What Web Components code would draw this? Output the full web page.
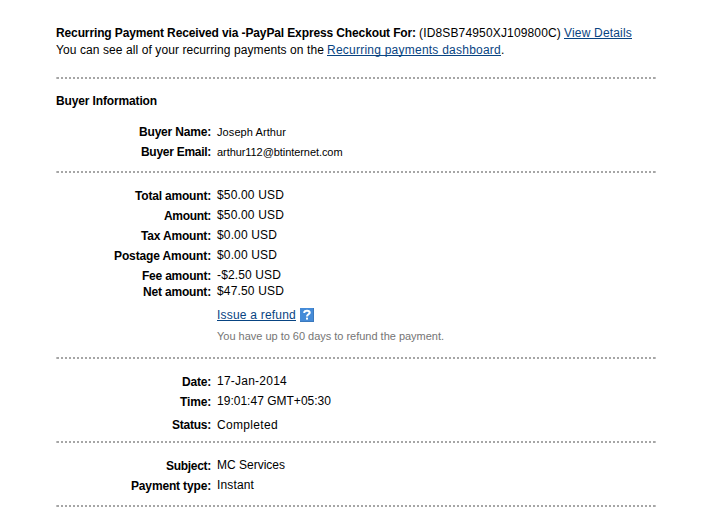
<!DOCTYPE html>
<html lang="en">
<head>
<meta charset="utf-8">
<title>Transaction Details</title>
<style>
  body {
    margin: 0;
    background: #fff;
    color: #000;
    font: 12px/16px "Liberation Sans", Arial, sans-serif;
  }
</style>
</head>
<body>
<transaction-details>
  <detail-section style="--top: 25px; --bottom: 19px">
    <div><fit-text width="360"><b>Recurring Payment Received via -PayPal Express Checkout For:</b></fit-text><fit-text width="142" style="margin-left: 3px">(ID8SB74950XJ109800C)</fit-text><text-link width="68" style="margin-left: 3px">View Details</text-link></div>
    <div style="margin-top: 1px"><fit-text width="268">You can see all of your recurring payments on the</fit-text><text-link width="174" style="margin-left: 3px">Recurring payments dashboard</text-link><span>.</span></div>
  </detail-section>

  <detail-section style="--top: 14px; --bottom: 11px">
    <div><fit-text width="101"><b>Buyer Information</b></fit-text></div>
    <detail-row label="Buyer Name:" label-width="72" value-width="69" small style="--before: 15px">Joseph Arthur</detail-row>
    <detail-row label="Buyer Email:" label-width="70" value-width="125.5" small>arthur112@btinternet.com</detail-row>
  </detail-section>

  <detail-section style="--top: 14px; --bottom: 13px">
    <detail-row label="Total amount:" label-width="76" value-width="67" style="--before: 0px; --drop: 1px">$50.00 USD</detail-row>
    <detail-row label="Amount:" label-width="47" value-width="67" style="--drop: 1px">$50.00 USD</detail-row>
    <detail-row label="Tax Amount:" label-width="70" value-width="60" style="--drop: 1px">$0.00 USD</detail-row>
    <detail-row label="Postage Amount:" label-width="97" value-width="60" style="--drop: 1px">$0.00 USD</detail-row>
    <detail-row label="Fee amount:" label-width="69" value-width="64" style="--drop: 1px">-$2.50 USD</detail-row>
    <detail-row label="Net amount:" label-width="68" value-width="67" style="--before: 0px; --drop: 1px">$47.50 USD</detail-row>
    <refund-action>
      <text-link slot="link" width="79">Issue a refund</text-link>
      <fit-text slot="hint" width="227">You have up to 60 days to refund the payment.</fit-text>
    </refund-action>
  </detail-section>

  <detail-section style="--top: 14px; --bottom: 8px">
    <detail-row label="Date:" label-width="29" value-width="70" style="--before: 0px; --drop: 1px">17-Jan-2014</detail-row>
    <detail-row label="Time:" label-width="31" value-width="114" style="--drop: 1px">19:01:47 GMT+05:30</detail-row>
    <detail-row label="Status:" label-width="39" value-width="61" style="--before: 8px">Completed</detail-row>
  </detail-section>

  <detail-section style="--top: 14px; --bottom: 12px">
    <detail-row label="Subject:" label-width="45" value-width="68" style="--before: 0px; --drop: 1px">MC Services</detail-row>
    <detail-row label="Payment type:" label-width="80" value-width="37" style="--drop: 1px">Instant</detail-row>
  </detail-section>
</transaction-details>

<script>
// Tracks its text so that the run fills the given width.
class FitText extends HTMLElement {
  constructor() {
    super();
    this._root = this.attachShadow({ mode: "open" });
    this._root.innerHTML = `
      <style>
        :host { display: inline-block; white-space: nowrap; vertical-align: top; }
      </style>
      <slot></slot>
    `;
  }

  connectedCallback() {
    const width = parseFloat(this.getAttribute("width"));
    const length = this.textContent.trim().length;
    if (!width || !length) return;
    this.style.letterSpacing = "0px";
    const natural = this.getBoundingClientRect().width;
    this.style.letterSpacing = `${(width - natural) / length}px`;
  }
}

class TextLink extends HTMLElement {
  constructor() {
    super();
    const width = this.getAttribute("width");
    this._root = this.attachShadow({ mode: "open" });
    this._root.innerHTML = `
      <style>
        :host { display: inline-block; vertical-align: top; color: #084482; }
        fit-text {
          text-decoration: underline;
          text-decoration-thickness: 1px;
          text-underline-offset: 1px;
          text-decoration-skip-ink: none;
        }
      </style>
      <fit-text width="${width}">${this.textContent}</fit-text>
    `;
  }
}

class DetailRow extends HTMLElement {
  constructor() {
    super();
    const label = this.getAttribute("label");
    const labelWidth = this.getAttribute("label-width");
    const valueWidth = this.getAttribute("value-width");
    this._root = this.attachShadow({ mode: "open" });
    this._root.innerHTML = `
      <style>
        :host {
          display: flex;
          gap: 6px;
          height: 16px;
          margin-top: var(--before, 4px);
        }
        .label {
          width: 155px;
          padding-top: var(--drop, 0px);
          text-align: right;
          font-weight: bold;
        }
        :host([small]) .value { font-size: 11px; }
      </style>
      <div class="label"><fit-text width="${labelWidth}">${label}</fit-text></div>
      <div class="value"><fit-text width="${valueWidth}">${this.textContent}</fit-text></div>
    `;
  }
}

class HelpIcon extends HTMLElement {
  constructor() {
    super();
    this._root = this.attachShadow({ mode: "open" });
    this._root.innerHTML = `
      <style>
        :host { display: block; width: 14px; height: 14px; }
        svg { display: block; }
      </style>
      <svg width="14" height="14" viewBox="0 0 14 14">
        <rect width="14" height="14" fill="#3b79bd"/>
        <rect width="13" height="13" fill="#458bd8"/>
        <path d="M4.3 5V4.6C4.3 3.3 5.4 2.8 7 2.8S9.7 3.5 9.7 4.7C9.7 6.2 7 6.4 7 8.4" fill="none" stroke="#fff" stroke-width="2.1"/>
        <rect x="6" y="9.6" width="2" height="2" fill="#fff"/>
      </svg>
    `;
  }
}

class RefundAction extends HTMLElement {
  constructor() {
    super();
    this._root = this.attachShadow({ mode: "open" });
    this._root.innerHTML = `
      <style>
        :host { display: block; margin: 8px 0 0 161px; }
        .line { display: flex; gap: 4px; height: 16px; }
        help-icon { margin-top: 1px; }
        .hint { height: 16px; margin-top: 5px; font-size: 11px; color: #757575; }
      </style>
      <div class="line"><slot name="link"></slot><help-icon></help-icon></div>
      <div class="hint"><slot name="hint"></slot></div>
    `;
  }
}

class DetailSection extends HTMLElement {
  constructor() {
    super();
    this._root = this.attachShadow({ mode: "open" });
    this._root.innerHTML = `
      <style>
        :host { display: block; }
        .body {
          display: flex;
          flex-direction: column;
          padding: var(--top) 0 var(--bottom);
        }
        ::slotted(div) { display: flex; height: 16px; }
        /* square dots, the first and last one a pixel wider */
        .rule {
          height: 2px;
          background: repeating-linear-gradient(90deg, #a6a6a6 0 3px, #fff 3px 5px, #a6a6a6 5px 5px);
          background: repeating-linear-gradient(90deg, #a6a6a6 0 2px, #fff 2px 4px) 1px 0 / 4px 2px repeat-x;
          border: solid #c4c4c4;
          border-width: 0 1px;
          background-origin: border-box;
        }
      </style>
      <div class="body"><slot></slot></div>
      <div class="rule"></div>
    `;
  }
}

class TransactionDetails extends HTMLElement {
  constructor() {
    super();
    this._root = this.attachShadow({ mode: "open" });
    this._root.innerHTML = `
      <style>
        :host { display: block; width: 600px; margin-left: 56px; }
      </style>
      <slot></slot>
    `;
  }
}

window.customElements.define("transaction-details", TransactionDetails);
window.customElements.define("detail-section", DetailSection);
window.customElements.define("help-icon", HelpIcon);
window.customElements.define("refund-action", RefundAction);
window.customElements.define("detail-row", DetailRow);
window.customElements.define("text-link", TextLink);
window.customElements.define("fit-text", FitText);
</script>
</body>
</html>
